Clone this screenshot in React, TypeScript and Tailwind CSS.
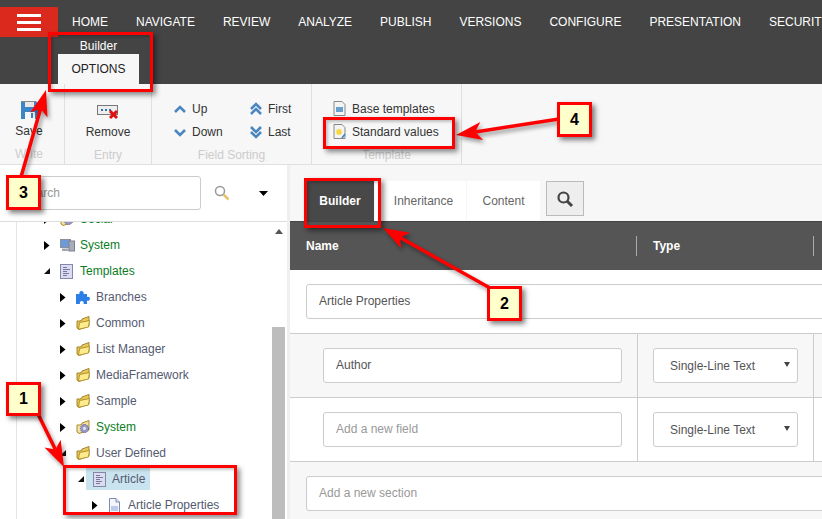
import React from "react";

const font = { fontFamily: "'Liberation Sans', Arial, sans-serif" };

const Caret = () => (
  <svg width="6" height="9" viewBox="0 0 6 9"><path d="M0 0l5.500 4.500L0 9z" fill="#000" /></svg>
);
const CaretOpen = () => (
  <svg width="6" height="6" viewBox="0 0 6 6"><path d="M6 0v6H0z" fill="#111" /></svg>
);
const Folder = () => (
  <svg width="15" height="14" viewBox="0 0 15 14">
    <path d="M1 5h3l2-1V3l7-2.500V10l-10 3.500L1 12z" fill="#e8c95a" stroke="#a5842a" />
    <path d="M3.500 6.500l10-2-1 6.500-10 2.300z" fill="#fdeb8e" stroke="#b3922e" />
  </svg>
);
const Doc = () => (
  <svg width="13" height="15" viewBox="0 0 13 15">
    <rect x="0.500" y="0.500" width="12" height="14" fill="#dcdcf0" stroke="#8585ad" />
    <path d="M3 3.500h4M3 5.500h7M3 7.500h4M3 9.500h6M3 11.500h4" stroke="#77779c" />
  </svg>
);
const Page = () => (
  <svg width="13" height="15" viewBox="0 0 13 15">
    <path d="M1.500.5h6.500l3.500 3.500v10.500h-10z" fill="#f4f6fb" stroke="#7d8db0" />
    <path d="M8 .5v3.500h3.500" fill="#dfe6f4" stroke="#7d8db0" />
    <rect x="3" y="8" width="7" height="5" fill="#bccbe8" />
  </svg>
);
const Puzzle = () => (
  <svg width="14" height="14" viewBox="0 0 14 14">
    <path d="M0 4h3.500a2.200 2.200 0 1 1 4 0H11v3a2 2 0 1 1 0 3.500V14H7.500a2 2 0 1 0-3.500 0H0z" fill="#2c7fe6" />
  </svg>
);
const Monitor = () => (
  <svg width="15" height="13" viewBox="0 0 15 13">
    <rect x="0.500" y="0.500" width="10" height="8" fill="#6f9ad8" stroke="#8a8f9c" />
    <rect x="9" y="2" width="5.500" height="10" fill="#a9adb8" stroke="#7d818c" />
    <rect x="2" y="9.500" width="7" height="2.500" fill="#a3a6ae" />
  </svg>
);
const GearFolder = () => (
  <svg width="15" height="14" viewBox="0 0 15 14">
    <path d="M1 5h3l2-1V3l7-2.500V10l-10 3.500L1 12z" fill="#f2e3a4" stroke="#a98a2a" />
    <circle cx="8.500" cy="8.500" r="4" fill="#9a9ac8" stroke="#66668c" strokeDasharray="1.500 0.800" />
    <circle cx="8.500" cy="8.500" r="1.400" fill="#eee" />
  </svg>
);

type Row = { label: string; level: number; icon: React.ReactNode; open?: boolean; green?: boolean; selected?: boolean };
const rows: Row[] = [
  { label: "Social", level: 0, icon: <GearFolder />, green: true },
  { label: "System", level: 0, icon: <Monitor />, green: true },
  { label: "Templates", level: 0, icon: <Doc />, open: true, green: true },
  { label: "Branches", level: 1, icon: <Puzzle /> },
  { label: "Common", level: 1, icon: <Folder /> },
  { label: "List Manager", level: 1, icon: <Folder /> },
  { label: "MediaFramework", level: 1, icon: <Folder /> },
  { label: "Sample", level: 1, icon: <Folder /> },
  { label: "System", level: 1, icon: <GearFolder />, green: true },
  { label: "User Defined", level: 1, icon: <Folder />, open: true },
  { label: "Article", level: 2, icon: <Doc />, open: true, selected: true },
  { label: "Article Properties", level: 3, icon: <Page /> },
];
const indent = ["pl-[44px]", "pl-[60px]", "pl-[78px]", "pl-[92px]"];

const Chev = ({ up, double }: { up?: boolean; double?: boolean }) => (
  <svg width="14" height="14" viewBox="0 0 14 14" fill="none" stroke="#4a86c0" strokeWidth="2.600">
    {double ? (
      up ? (
        <>
          <path d="M2 7l5-5 5 5" />
          <path d="M2 12l5-5 5 5" />
        </>
      ) : (
        <>
          <path d="M2 2l5 5 5-5" />
          <path d="M2 7l5 5 5-5" />
        </>
      )
    ) : up ? (
      <path d="M2 10l5-5 5 5" />
    ) : (
      <path d="M2 5l5 5 5-5" />
    )}
  </svg>
);

const SortItem = ({ label, up, double }: { label: string; up?: boolean; double?: boolean }) => (
  <div className="flex items-center gap-[5px] h-[23px]">
    <Chev up={up} double={double} />
    <span>{label}</span>
  </div>
);

const Field = ({ text, placeholder }: { text: string; placeholder?: boolean }) => (
  <div className={`h-[35px] flex items-center bg-white border border-[#ccc] rounded-[3px] pl-[12px] pb-[2px] text-[12px] ${placeholder ? "text-[#999]" : "text-[#555]"}`}>
    {text}
  </div>
);

const FieldRow = ({ text, placeholder, gray }: { text: string; placeholder?: boolean; gray?: boolean }) => (
  <div className={`flex h-[64px] border-b border-[#ccc] ${gray ? "bg-[#f7f7f7]" : "bg-white"}`}>
    <div className="w-[348px] shrink-0 pl-[33px] pr-[15px] pt-[14px] border-r border-[#ccc]">
      <Field text={text} placeholder={placeholder} />
    </div>
    <div className="w-[176px] shrink-0 pl-[15px] pr-[15px] pt-[14px] border-r border-[#ccc]">
      <div className="h-[35px] flex items-center justify-between bg-white border border-[#ccc] rounded-[3px] pl-[16px] pr-[7px] text-[12px] text-[#555]">
        <span>Single-Line Text</span>
        <svg width="6" height="5" viewBox="0 0 6 5" className="-mt-[2px]"><path d="M0 0h6L3 5z" fill="#444" /></svg>
      </div>
    </div>
  </div>
);

const Box = ({ className }: { className: string }) => (
  <div className={`absolute border-[3px] border-[#ff0000] shadow-[3px_3px_5px_rgba(0,0,0,0.45),inset_2px_2px_3px_rgba(0,0,0,0.22)] pointer-events-none ${className}`} />
);
const Num = ({ n, className }: { n: string; className: string }) => (
  <div className={`absolute flex items-center justify-center border-[3px] border-[#ff0000] bg-[#ffffcc] shadow-[3px_3px_5px_rgba(0,0,0,0.5)] text-[16px] font-bold text-black ${className}`}>
    {n}
  </div>
);

const arrows = [
  { x1: 21, y1: 177, x2: 46, y2: 90 },
  { x1: 559, y1: 119, x2: 456, y2: 135 },
  { x1: 490, y1: 288, x2: 383, y2: 228 },
  { x1: 38, y1: 414, x2: 64, y2: 467 },
];

function Arrow({ x1, y1, x2, y2 }: { x1: number; y1: number; x2: number; y2: number }) {
  const a = Math.atan2(y2 - y1, x2 - x1);
  const L = 26, W = 9, n = 15;
  const bx = x2 - L * Math.cos(a), by = y2 - L * Math.sin(a);
  const nx = x2 - n * Math.cos(a) * 1.3, ny = y2 - n * Math.sin(a) * 1.3;
  const px = -Math.sin(a), py = Math.cos(a);
  const pts = `${x2},${y2} ${bx + px * W},${by + py * W} ${nx},${ny} ${bx - px * W},${by - py * W}`;
  return (
    <g>
      <line x1={x1} y1={y1} x2={nx} y2={ny} stroke="#ff0000" strokeWidth="3.500" />
      <polygon points={pts} fill="#ff0000" />
    </g>
  );
}

export default function App() {
  return (
    <div className="relative w-[822px] h-[519px] overflow-hidden bg-white" style={font}>
      {/* Top bar */}
      <header className="h-[84px] bg-[#444444] flex flex-col">
        <div className="flex pt-[7px] h-[37px]">
          <div className="w-[58px] h-[30px] bg-[#dc291e] flex flex-col items-center justify-center gap-[4px] shrink-0">
            <div className="w-[24px] h-[3px] bg-white" />
            <div className="w-[24px] h-[3px] bg-white" />
            <div className="w-[24px] h-[3px] bg-white" />
          </div>
          <nav className="flex gap-[28px] pl-[14px] text-[12px] text-white whitespace-nowrap h-[30px] items-center">
            {["HOME", "NAVIGATE", "REVIEW", "ANALYZE", "PUBLISH", "VERSIONS", "CONFIGURE", "PRESENTATION", "SECURITY"].map((t) => (
              <span key={t}>{t}</span>
            ))}
          </nav>
        </div>
        <div className="ml-[58px] w-[81px] flex flex-col flex-1">
          <div className="h-[17px] flex items-center justify-center text-[12px] text-white">Builder</div>
          <div className="h-[30px] bg-[#f7f7f7] flex items-center justify-center text-[12px] text-[#222]">OPTIONS</div>
        </div>
      </header>

      {/* Ribbon */}
      <section className="h-[81px] bg-[#f7f7f7] border-b border-[#e0e0e0] flex text-[12px] text-[#333]">
        <div className="w-[65px] border-r border-[#e0e0e0] flex flex-col items-center">
          <svg width="18" height="18" viewBox="0 0 18 18" className="mt-[17px] mr-[4px]">
            <path d="M0 0h15l3 3v15H0z" fill="#3d85c6" />
            <rect x="4" y="1" width="9" height="5" fill="#e8e8e8" />
            <rect x="0" y="0" width="15" height="1" fill="#8a8a8a" />
            <rect x="4" y="11" width="10" height="7" fill="#f7f7f7" />
            <rect x="10" y="12" width="2" height="5" fill="#3d85c6" />
          </svg>
          <span className="mt-[4px] leading-[16px] mr-[6px]">Save</span>
          <span className="mt-[7px] leading-[16px] text-[#ccc] mr-[6px]">Write</span>
        </div>
        <div className="w-[87px] border-r border-[#e0e0e0] flex flex-col items-center">
          <svg width="22" height="15" viewBox="0 0 22 15" className="mt-[21px]">
            <rect x="0.500" y="0.500" width="20" height="9" fill="#eee" stroke="#777" />
            <path d="M4 5h2M8 5h2M12 5h2" stroke="#3d6fa8" strokeWidth="2" />
            <path d="M13 6l7 7M20 6l-7 7" stroke="#e01010" strokeWidth="3" />
          </svg>
          <span className="mt-[4px] leading-[16px]">Remove</span>
          <span className="mt-[7px] leading-[16px] text-[#ccc]">Entry</span>
        </div>
        <div className="w-[160px] border-r border-[#e0e0e0] flex flex-col items-center">
          <div className="grid grid-cols-[76px_auto] pt-[13px] w-full pl-[21px]">
            <SortItem label="Up" up />
            <SortItem label="First" up double />
            <SortItem label="Down" />
            <SortItem label="Last" double />
          </div>
          <span className="mt-[4px] leading-[16px] text-[#ccc]">Field Sorting</span>
        </div>
        <div className="w-[150px] border-r border-[#e0e0e0] flex flex-col">
          <div className="pt-[13px] pl-[21px]">
            <div className="flex items-center gap-[6px] h-[23px]">
              <svg width="13" height="15" viewBox="0 0 13 15"><path d="M1 .5h8l3 3v11H1z" fill="#f4f4f4" stroke="#888" /><rect x="3" y="6" width="7" height="5" fill="#6aa0cc" /></svg>
              <span>Base templates</span>
            </div>
            <div className="flex items-center gap-[6px] h-[23px]">
              <svg width="13" height="15" viewBox="0 0 13 15"><path d="M1 .5h8l3 3v11H1z" fill="#f4f4f4" stroke="#888" /><circle cx="6" cy="8" r="3" fill="#f5d442" stroke="#f9e79a" /><path d="M9 14l3-4" stroke="#3d85c6" strokeWidth="1.500" /></svg>
              <span>Standard values</span>
            </div>
          </div>
          <span className="mt-[4px] leading-[16px] text-[#ccc] text-center">Template</span>
        </div>
      </section>

      {/* Body */}
      <div className="flex h-[354px]">
        {/* Sidebar */}
        <aside className="w-[290px] shrink-0 flex border-r-[3px] border-[#efefef]">
          <div className="w-full flex flex-col bg-white">
            <div className="h-[57px] shrink-0 border-b border-[#ddd] flex items-center pl-[16px]">
              <div className="w-[185px] h-[34px] border border-[#ccc] rounded-[3px] flex items-center pl-[5px] text-[12px] text-[#999]">Search</div>
              <svg width="18" height="18" viewBox="0 0 18 18" className="ml-[12px]">
                <circle cx="7" cy="7" r="4.500" fill="none" stroke="#999" strokeWidth="1.500" />
                <path d="M10.500 10.500l5 5" stroke="#e8c26a" strokeWidth="2.500" />
              </svg>
              <svg width="9" height="5" viewBox="0 0 9 5" className="ml-[28px]"><path d="M0 0h9L4.500 5z" fill="#000" /></svg>
            </div>
            <div className="flex-1 flex overflow-hidden">
              <div className="flex-1 relative overflow-hidden">
                <div className="absolute left-[16px] top-0 bottom-0 w-px bg-[#e4e4e4]" />
                <div className="-mt-[16px]">
                  {rows.map((r) => (
                    <div key={r.label + r.level} className={`h-[26px] flex items-center ${indent[r.level]}`}>
                      <span className={`flex items-center ${r.selected ? "w-[8px]" : "w-[12px]"}`}>{r.open ? <CaretOpen /> : <Caret />}</span>
                      <span className={`flex items-center h-[22px] ${r.selected ? "bg-[#c9e4ee] pr-[5px]" : ""}`}>
                        <span className={`flex items-center ${r.selected ? "pl-[7px] w-[23px]" : "pl-[4px] w-[21px]"}`}>{r.icon}</span>
                        <span className={`text-[12px] pl-[3px] whitespace-nowrap ${r.green ? "text-[#0a7d1e]" : "text-[#555a70]"}`}>{r.label}</span>
                      </span>
                    </div>
                  ))}
                </div>
              </div>
              <div className="w-[13px] mr-[2px] flex flex-col">
                <div className="h-[105px] flex justify-center pt-[7px]">
                  <svg width="8" height="5" viewBox="0 0 8 5"><path d="M4 0l4 5H0z" fill="#555" /></svg>
                </div>
                <div className="flex-1 bg-[#bdbdbd]" />
              </div>
            </div>
          </div>
        </aside>

        {/* Main */}
        <main className="flex-1 min-w-0 flex flex-col">
          <div className="h-[56px] bg-[#f7f7f7] flex items-start pt-[16px] pl-[16px] shrink-0">
            <div className="h-[40px] w-[68px] bg-[#484848] flex items-center justify-center text-[12px] font-bold text-white">Builder</div>
            <div className="h-[40px] w-[91px] ml-[1px] bg-white flex items-center justify-center text-[12px] text-[#666] pl-[6px]">Inheritance</div>
            <div className="h-[40px] w-[73px] ml-[1px] bg-white flex items-center justify-center text-[12px] text-[#666]">Content</div>
            <div className="h-[35px] w-[38px] ml-[6px] bg-[#eee] border border-[#bbb] flex items-center justify-center">
              <svg width="18" height="18" viewBox="0 0 18 18" fill="none" stroke="#444" strokeWidth="2.200">
                <circle cx="7.500" cy="7.500" r="5" />
                <path d="M11 11l5 5" strokeWidth="3" />
              </svg>
            </div>
          </div>
          <div className="h-[49px] bg-[#555] border-t border-[#444] flex items-center shrink-0 text-[12px] font-bold text-white">
            <div className="w-[347px] h-[20px] pl-[16px] border-r border-[#aaa] flex items-center">Name</div>
            <div className="w-[177px] h-[20px] pl-[16px] border-r border-[#aaa] flex items-center">Type</div>
          </div>
          <div className="h-[64px] pl-[16px] pt-[14px] border-b border-[#ccc] bg-white -mr-[4px] shrink-0">
            <Field text="Article Properties" />
          </div>
          <FieldRow text="Author" gray />
          <FieldRow text="Add a new field" placeholder />
          <div className="flex-1 bg-[#f7f7f7] pl-[16px] pt-[14px] -mr-[4px]">
            <Field text="Add a new section" placeholder />
          </div>
        </main>
      </div>

      {/* Annotations */}
      <svg width="822" height="519" className="absolute inset-0 pointer-events-none" style={{ filter: "drop-shadow(2px 3px 2px rgba(0,0,0,0.4))" }}>
        {arrows.map((a) => (
          <Arrow key={a.x1} {...a} />
        ))}
      </svg>
      <Box className="left-[48px] top-[32px] w-[105px] h-[60px]" />
      <Box className="left-[323px] top-[117px] w-[132px] h-[32px]" />
      <Box className="left-[304px] top-[178px] w-[77px] h-[50px]" />
      <Box className="left-[63px] top-[465px] w-[174px] h-[50px]" />
      <Num n="1" className="left-[6px] top-[382px] w-[35px] h-[34px]" />
      <Num n="2" className="left-[487px] top-[286px] w-[35px] h-[35px]" />
      <Num n="3" className="left-[6px] top-[175px] w-[35px] h-[35px]" />
      <Num n="4" className="left-[557px] top-[102px] w-[35px] h-[35px]" />
    </div>
  );
}
